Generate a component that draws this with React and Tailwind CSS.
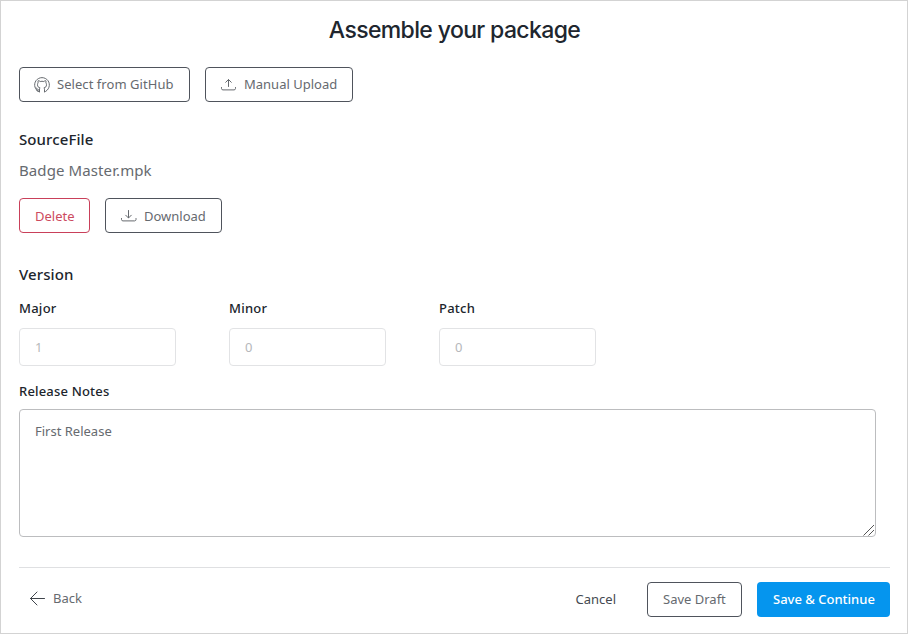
const outline =
  "flex h-[35px] items-center rounded-[4px] border bg-white pl-[15px] text-[13px] whitespace-nowrap";

function Stroke({ children, className = "" }) {
  return (
    <svg
      viewBox="0 0 16 16"
      className={`h-4 w-4 shrink-0 ${className}`}
      fill="none"
      stroke="currentColor"
      strokeWidth="1"
      strokeLinecap="round"
      strokeLinejoin="round"
    >
      {children}
    </svg>
  );
}

function GitHubIcon() {
  return (
    <Stroke className="-ml-px">
      <path d="M5.500 14.600v-2.400c0-.6.2-1 .6-1.300-1.700-.3-2.600-1.400-2.600-3.200 0-.8.2-1.300.6-1.800-.2-.7-.2-1.500.1-2.200.8 0 1.500.4 2 .8 1.100-.3 2.500-.3 3.600 0 .5-.4 1.200-.8 2-.8.3.7.3 1.500.1 2.200.4.500.6 1 .6 1.800 0 1.800-.9 2.900-2.600 3.200.4.300.6.700.6 1.300v2.400" />
      <path d="M5.500 15A7.400 7.400 0 1 1 10.500 15" />
      <path d="M5.500 12.800c-1.200.3-1.900-.1-2.300-.9-.3-.6-.7-1-1.200-1.200M5.500 14.300c-1.300.2-2.300-.2-3-1" />
    </Stroke>
  );
}

function UploadIcon() {
  return (
    <Stroke>
      <path d="M7.500 9.500V2.700M4.700 5.300 7.500 2.500l2.800 2.800M.5 10.500v1c0 .8.600 1.400 1.400 1.400h11.200c.8 0 1.400-.6 1.400-1.400v-1" />
    </Stroke>
  );
}

function DownloadIcon() {
  return (
    <Stroke>
      <path d="M7.500 1.500v7.300M4.700 6.200 7.500 9l2.800-2.800M.5 9.500v1c0 .8.600 1.400 1.400 1.400h11.700c.8 0 1.400-.6 1.400-1.400v-1" />
    </Stroke>
  );
}

function VersionField({ label, value }) {
  return (
    <label className="block w-[157px]">
      <span className="block h-5 text-[13px] leading-5 font-medium tracking-[0.25px] text-[#20252c]">{label}</span>
      <input
        disabled
        defaultValue={value}
        className="mt-[10px] block h-[38px] w-full rounded-[4px] border border-[#e2e3e5] bg-white px-[15px] text-[13px] text-[#b6b8bb]"
      />
    </label>
  );
}

export default function App() {
  return (
    <main className="flex h-[634px] w-[908px] flex-col border border-[#d3d3d3] bg-white pr-[17px] pl-[18px] font-['Noto_Sans',sans-serif] text-[#666a6f]">
      <h1 className="mt-3 h-[34px] text-center font-['Inter',sans-serif] text-[23px] leading-[34px] font-medium tracking-[-0.63px] text-[#20262e]">
        Assemble your package
      </h1>

      <div className="mt-5 flex gap-[15px]">
        <button className={`${outline} w-[171px] gap-[7px] border-[#4f545c]`}>
          <GitHubIcon />
          <span className="tracking-[0.05px]">Select from GitHub</span>
        </button>
        <button className={`${outline} w-[148px] gap-[7px] border-[#4f545c]`}>
          <UploadIcon />
          <span>Manual Upload</span>
        </button>
      </div>

      <h2 className="mt-[25px] h-6 text-[15px] leading-6 font-medium tracking-[0.1px] text-[#20252c]">SourceFile</h2>
      <p className="mt-[7px] h-6 text-[15px] leading-6 tracking-[0.1px]">Badge Master.mpk</p>

      <div className="mt-4 flex gap-[15px]">
        <button className={`${outline} w-[71px] border-[#c9405a] pt-[2px] text-[#cc4a5e]`}>Delete</button>
        <button className={`${outline} w-[117px] gap-[7px] border-[#4f545c] pt-[2px]`}>
          <DownloadIcon />
          <span>Download</span>
        </button>
      </div>

      <h2 className="mt-[29px] h-6 text-[15px] leading-6 font-medium tracking-[0.1px] text-[#20252c]">Version</h2>

      <div className="mt-3 flex gap-[53px]">
        <VersionField label="Major" value="1" />
        <VersionField label="Minor" value="0" />
        <VersionField label="Patch" value="0" />
      </div>

      <label className="relative mt-[15px] block w-[857px]">
        <span className="block h-5 text-[13px] leading-5 font-medium tracking-[0.18px] text-[#20252c]">Release Notes</span>
        <textarea
          defaultValue="First Release"
          className="mt-2 block h-[128px] w-full resize-none rounded-[4px] border border-[#bcbdbf] bg-white px-[15px] py-[11px] text-[13px] leading-5"
        />
        <svg viewBox="0 0 12 12" className="absolute right-px bottom-px h-3 w-3" stroke="#555" strokeWidth="1">
          <path d="M.5 11.500 11 1M5.500 11.500 11 6" />
        </svg>
      </label>

      <footer className="mt-[30px] flex border-t border-[#dfe0e2] pt-[14px]">
        <button className="flex h-[33px] items-center gap-[7px] pl-[11px] text-[13px]">
          <Stroke className="text-[#3f444b]">
            <path d="M14.500 7.500H.5M7 1 .5 7.500 7 14" />
          </Stroke>
          <span>Back</span>
        </button>
        <div className="ml-auto flex items-center">
          <button className="mr-[31px] text-[13px] text-[#454a51]">Cancel</button>
          <button className={`${outline} mr-[15px] w-[95px] border-[#4f545c]`}>Save Draft</button>
          <button className="flex h-[35px] w-[133px] items-center rounded-[4px] bg-[#0595ee] pl-4 text-[13px] font-medium whitespace-nowrap text-white">
            Save &amp; Continue
          </button>
        </div>
      </footer>
    </main>
  );
}
